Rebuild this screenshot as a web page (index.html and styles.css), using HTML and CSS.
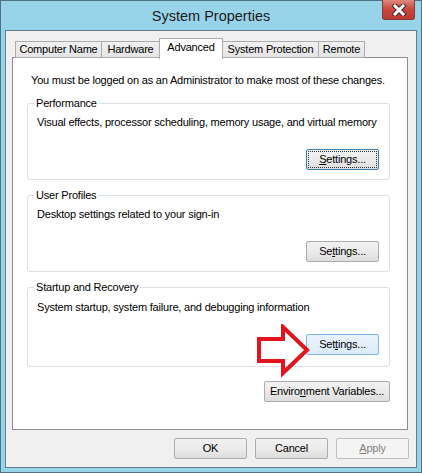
FILE: index.html
```html
<!DOCTYPE html>
<html lang="en">
<head>
    <meta charset="UTF-8">
    <meta name="viewport" content="width=device-width, initial-scale=1.0">
    <title>System Properties</title>
    <link rel="stylesheet" href="styles.css">
</head>
<body>
    <div class="window">
        <div class="titlebar">
            <span></span>
            <span class="title">System Properties</span>
            <button class="close" aria-label="Close">
                <svg width="16" height="12" viewBox="0 0 16 12">
                    <path d="M4 2 L12 10 M12 2 L4 10" stroke="#4a2a26" stroke-width="5" stroke-linecap="square"/>
                    <path d="M4 2 L12 10 M12 2 L4 10" stroke="#fff" stroke-width="3" stroke-linecap="square"/>
                </svg>
            </button>
        </div>

        <div class="client">
            <div class="tabs">
                <div class="tab tab-cn">Computer Name</div>
                <div class="tab tab-hw">Hardware</div>
                <div class="tab tab-adv selected">Advanced</div>
                <div class="tab tab-sp">System Protection</div>
                <div class="tab tab-rm">Remote</div>
            </div>

            <div class="panel">
                <p class="intro">You must be logged on as an Administrator to make most of these changes.</p>

                <fieldset class="group">
                    <legend>Performance</legend>
                    <p class="desc">Visual effects, processor scheduling, memory usage, and virtual memory</p>
                    <div class="group-actions">
                        <button class="button focused"><span class="focus-ring"><u>S</u>ettings...</span></button>
                    </div>
                </fieldset>

                <fieldset class="group">
                    <legend>User Profiles</legend>
                    <p class="desc">Desktop settings related to your sign-in</p>
                    <div class="group-actions">
                        <button class="button">Se<u>t</u>tings...</button>
                    </div>
                </fieldset>

                <fieldset class="group group-last">
                    <legend>Startup and Recovery</legend>
                    <p class="desc">System startup, system failure, and debugging information</p>
                    <div class="group-actions">
                        <button class="button hover">Set<u>t</u>ings...</button>
                    </div>
                    <svg class="arrow" width="56" height="54" viewBox="0 0 56 54">
                        <polygon points="3,15 27,15 27,3 51,26 27,49 27,37 3,37" fill="none" stroke="#e3141b" stroke-width="4" stroke-linejoin="miter"/>
                    </svg>
                </fieldset>

                <div class="env-row">
                    <button class="button env">Enviro<u>n</u>ment Variables...</button>
                </div>
            </div>

            <div class="dialog-buttons">
                <button class="button dlg">OK</button>
                <button class="button dlg">Cancel</button>
                <button class="button dlg" disabled><u>A</u>pply</button>
            </div>
        </div>
    </div>
</body>
</html>
```

FILE: styles.css
```css
body {
    margin: 0;
    font-family: "Liberation Sans", Arial, sans-serif;
    font-size: 11px;
    letter-spacing: -0.2px;
    color: #000;
}

.window {
    width: 422px;
    height: 473px;
    box-sizing: border-box;
    border: 1px solid #4f7385;
    padding: 0 4px 4px 4px;
    background: #98d4e9;
    display: flex;
    flex-direction: column;
}

.titlebar {
    height: 29px;
    display: grid;
    grid-template-columns: 1fr auto 1fr;
    align-items: start;
}

.title {
    font-size: 14.5px;
    letter-spacing: 0;
    line-height: 16px;
    padding-top: 7px;
    color: #1c1c1c;
}

.close {
    justify-self: end;
    width: 33px;
    height: 20px;
    margin: -1px 2px 0 0;
    padding: 0;
    border: 1px solid #8a3a32;
    border-top: none;
    border-radius: 0 0 3px 3px;
    background: linear-gradient(#e2877e, #c8463c 50%, #bd3a31);
    display: flex;
    align-items: center;
    justify-content: center;
}

.client {
    flex: 1;
    border: 1px solid #5f7d8c;
    background: #f0f0f0;
    padding: 0 8px 0 6px;
    display: flex;
    flex-direction: column;
}

.tabs {
    display: flex;
    align-items: flex-end;
    height: 21px;
    margin-top: 7px;
    margin-bottom: -2px;
    padding-left: 3px;
    position: relative;
    z-index: 1;
}

.tab {
    box-sizing: border-box;
    height: 17px;
    margin-bottom: 1px;
    border: 1px solid #acacac;
    background: linear-gradient(#f0f0f0, #e5e5e5);
    text-align: center;
    line-height: 15px;
    white-space: nowrap;
}

.tab + .tab {
    margin-left: -1px;
}

.tab.selected {
    height: 21px;
    margin-bottom: 0;
    border-bottom: none;
    background: #fff;
    line-height: 17px;
}

.tab-cn { width: 87px; }
.tab-hw { width: 59px; }
.tab-adv { width: 64px; }
.tab-sp { width: 97px; }
.tab-rm { width: 47px; }

.panel {
    flex: 1;
    background: #fff;
    border: 1px solid #898c95;
    padding: 15px 17px 0 14px;
}

.intro {
    margin: 0 0 0 4px;
    line-height: 15px;
}

.group {
    margin: 8px 0 0 0;
    padding: 0 10px 9px 9px;
    border: 1px solid #dcdfe3;
    border-radius: 3px;
    position: relative;
}

.group legend {
    padding: 0 2px;
    margin-left: -3px;
    line-height: 15px;
}

.desc {
    margin: 4px 0 0 0;
    line-height: 15px;
}

.group-actions {
    display: flex;
    justify-content: flex-end;
    margin-top: 19px;
}

.group-last .desc {
    margin-top: 5px;
}

.group-last {
    padding-bottom: 11px;
}

.button {
    font-family: inherit;
    font-size: 11px;
    letter-spacing: -0.2px;
    color: #000;
    height: 21px;
    width: 73px;
    padding: 0;
    border: 1px solid #acacac;
    border-radius: 2px;
    background: linear-gradient(#f2f2f2, #ebebeb 50%, #dddddd);
    line-height: 17px;
}

.button.focused {
    border-color: #3c7fb1;
    padding: 1px;
}

.focus-ring {
    display: block;
    height: 17px;
    border: 1px dotted #333;
    box-sizing: border-box;
    line-height: 15px;
}

.button.hover {
    border-color: #7eb4ea;
    background: linear-gradient(#ecf4fc, #dcecfc);
}

.button:disabled {
    color: #838383;
    border-color: #bfbfbf;
    background: #f4f4f4;
}

.arrow {
    position: absolute;
    left: 228px;
    top: 29px;
}

.env-row {
    display: flex;
    justify-content: flex-end;
    margin-top: 14px;
}

.button.env {
    width: 126px;
}

.dialog-buttons {
    display: flex;
    justify-content: flex-end;
    gap: 8px;
    padding: 8px 0 8px 0;
    margin-right: -1px;
}
```
